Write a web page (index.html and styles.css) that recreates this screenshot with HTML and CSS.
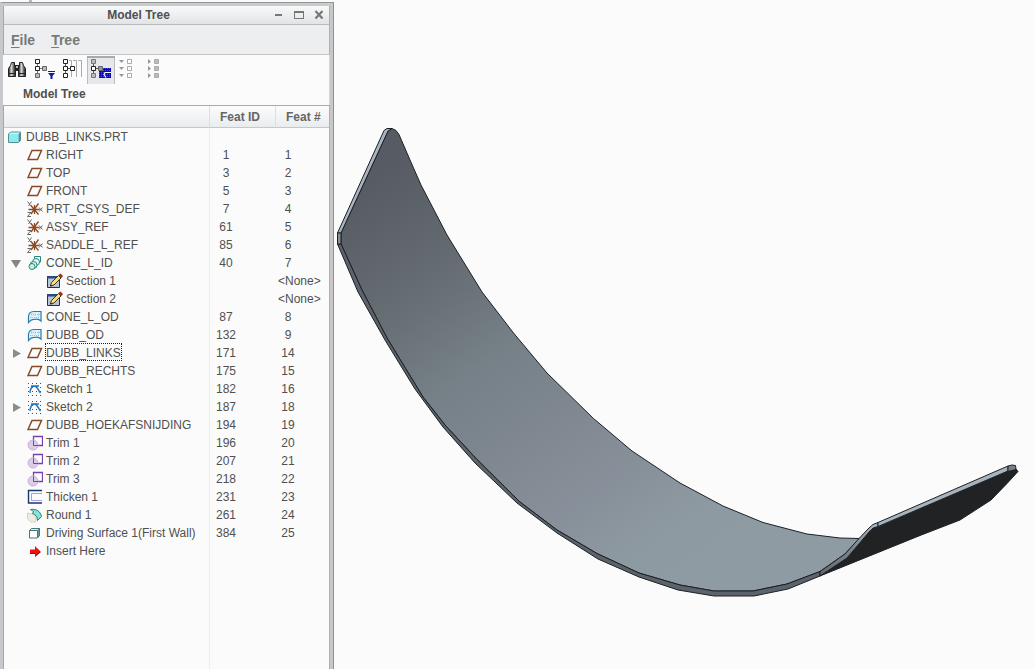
FILE: index.html
```html
<!DOCTYPE html>
<html lang="en">
<head>
<meta charset="utf-8">
<title>Model Tree</title>
<link rel="stylesheet" href="styles.css">
</head>
<body>
<svg class="defs" aria-hidden="true">
  <defs>
    <pattern id="dither" width="2" height="2" patternUnits="userSpaceOnUse"><path fill="#0c0cb0" d="M0 0h2v2H0z"/><path fill="#4a4ad0" d="M0 0h1v1H0z"/></pattern>
    <linearGradient id="barrel" x1="0" x2="1"><stop offset="0" stop-color="#111"/><stop offset=".4" stop-color="#ddd"/><stop offset="1" stop-color="#111"/></linearGradient>
    <symbol id="part" viewBox="0 0 16 16"><path fill="#c9f8f6" d="M1.500 5l2-2h10l-2 2z"/><path fill="#86eeee" d="M1.500 5h10v8.500h-10z"/><path fill="#35989b" d="M11.500 5l2-2v8.500l-2 2z"/><path fill="none" stroke="#5a8f92" stroke-linejoin="round" d="M1.500 5l2-2h10v8.500l-2 2h-10z"/></symbol>
    <symbol id="plane" viewBox="0 0 16 16"><path fill="none" stroke="#874a26" stroke-width="1.500" d="M5 3.500h9.500l-4 9H1z"/></symbol>
    <symbol id="csys" viewBox="0 0 16 16"><path fill="none" stroke="#8d4a22" stroke-width="1.300" d="M1.500 8.500h11M3.500 4l8 9.500M11.500 2.500L4 13M7.500 4v9"/><path fill="none" stroke="#666" d="M.5.500l2 2.500M4.500.500L1.500 5M12 6.500l3.500 4M15.500 6.500l-3.500 4M.5 11.500H4l-3.500 4H4"/></symbol>
    <symbol id="blend" viewBox="0 0 16 16"><g stroke="#27867a" fill="#f1fffc"><path d="M7.500 1.500h6v5.500h-6z"/><circle cx="9" cy="7" r="3.500" fill="#e6faf4"/><circle cx="6.500" cy="10" r="3.500" fill="#dff8f1"/><circle cx="5" cy="11.500" r="3" fill="#c4f1e5"/></g></symbol>
    <symbol id="section" viewBox="0 0 16 16"><path fill="#b9c5d4" stroke="#1f3152" d="M.5 3.500h12v11H.5z"/><path fill="#2a4a80" d="M0 3h13v2.500H0z"/><path fill="#f5e080" stroke="#3f3515" d="M3.500 13l1-3.500 7-7 2.500 2.500-7 7z"/><path fill="#a22b20" d="M11.500 2l2-1.500L16 3l-1.500 2z"/><path fill="#222" d="M3 13.500l.5-2 1.500 1.500z"/></symbol>
    <symbol id="surface" viewBox="0 0 16 16"><path fill="#e6f7fd" stroke="#2879ac" stroke-width="1.200" d="M1.500 13.500V8c0-4 2-5.500 5.500-5.500h7V12c-2-2-4-2.500-6.500-1.500-2.500-.5-4 .5-6 3z"/><path fill="none" stroke="#8cc4e2" stroke-dasharray="1 1" d="M5 4v6M8 3.500v6M11.500 3.500v6M3 8.500h10M4 5.500h9"/></symbol>
    <symbol id="sketch" viewBox="0 0 16 16"><path fill="none" stroke="#2d4f8c" stroke-dasharray="1 3" d="M1 2.500h14M1 6.500h14M1 10.500h14M1 14.500h14"/><path fill="none" stroke="#1775c4" stroke-width="1.400" d="M3 12c0-4 2-7 4.500-7s3.500 4 6 7M4 5h8"/></symbol>
    <symbol id="trim" viewBox="0 0 16 16"><path fill="#fff" stroke="#7a3fae" stroke-width="1.300" d="M6.500 1.500h9v9h-9z"/><circle cx="6" cy="10" r="5" fill="#dccbe9" stroke="#c9b4da"/><path fill="none" stroke="#7a3fae" d="M6.500 5.500v5H11"/></symbol>
    <symbol id="thicken" viewBox="0 0 16 16"><path fill="none" stroke="#17396f" stroke-width="1.400" d="M15 1.500H1.500v12.500H15"/><path fill="none" stroke="#aa9ce0" d="M15 4.500H4.500v7H15"/></symbol>
    <symbol id="round" viewBox="0 0 16 16"><path fill="#efede3" stroke="#d5d2c5" d="M.5 6l6 1.500 2.500 3.500v4H4l-3.500-3z"/><path fill="#80e6d8" stroke="#3c7770" d="M3.500 2.500c6-1 10 2 11 7l-4 4c0-4-2-6-5-7l1-2z"/></symbol>
    <symbol id="solid" viewBox="0 0 16 16"><path fill="#fff" stroke="#487777" d="M2.500 5.500l2-2h8v7l-2.500 2.500H2.500z"/><path fill="#6b9999" stroke="#487777" d="M10.500 5.500l2-2v7l-2 2.500z"/><path fill="#d6efed" stroke="#487777" d="M2.500 5.500h8l2-2h-8z"/></symbol>
    <symbol id="insert" viewBox="0 0 16 16"><path fill="#801010" d="M3 8h5V4l6 5-6 5v-3H3z"/><path fill="#ee1313" d="M3 6.500h5V3l5 5-5 5v-3H3z"/></symbol>
    <symbol id="open" viewBox="0 0 16 16"><path fill="#858585" d="M3 5h10l-5 8z"/></symbol>
    <symbol id="closed" viewBox="0 0 16 16"><path fill="#8c8c8c" d="M5 4l8 4.500L5 13z"/></symbol>
  </defs>
</svg>
<main class="app">
  <section class="side">
    <div class="backdrop"></div>
    <div class="window">
      <header class="titlebar">
        <h1 class="title">Model Tree</h1>
        <div class="controls">
          <button class="control" type="button" aria-label="Minimize"><svg viewBox="0 0 12 12"><path fill="#777" d="M2 5h7v2H2z"/></svg></button>
          <button class="control" type="button" aria-label="Maximize"><svg viewBox="0 0 12 12"><path fill="#777" d="M1 2h10v8H1zM2 4v5h8V4z" fill-rule="evenodd"/></svg></button>
          <button class="control" type="button" aria-label="Close"><svg viewBox="0 0 12 12"><path fill="none" stroke="#777" stroke-width="2.200" d="M2.500 2l7 7.500M9.500 2l-7 7.500"/></svg></button>
        </div>
      </header>
      <nav class="menu">
        <button class="menu-item" type="button"><u>F</u>ile</button>
        <button class="menu-item" type="button"><u>T</u>ree</button>
      </nav>
      <div class="toolbar">
        <button class="tool" type="button" aria-label="Find"><svg viewBox="0 0 28 28"><path fill="url(#barrel)" stroke="#222" d="M8.500 6.500h3v4l1 2v8H5.500v-8l2-3z"/><path fill="url(#barrel)" stroke="#222" d="M16.500 6.500h3l1 3 2 3v8h-7v-8l1-2z"/><path fill="#222" d="M12 9h4v6h-4zM5 17h8v1H5zM15 17h8v1h-8z"/><path fill="#bbb" d="M13 10h2v2h-2z"/></svg></button>
        <button class="tool" type="button" aria-label="Tree Filters"><svg viewBox="0 0 28 28"><path fill="none" stroke="#777" d="M6.500 7v12M8 12.500h4"/><path fill="#fff" stroke="#222" d="M4.500 3.500h4v4h-4zM4.500 10.500h4v4h-4z"/><path fill="#bbb" stroke="#666" d="M4.500 17.500h4v4h-4zM11.500 10.500h4v4h-4z"/><path fill="#1717a0" d="M17 15h7v1h-7zM17 17h7l-2.500 3v3h-2v-3z"/></svg></button>
        <button class="tool" type="button" aria-label="Tree Columns"><svg viewBox="0 0 28 28"><path fill="none" stroke="#aaa" d="M10 4.500h2.500V21M14 4.500h3.500V21M19 4.500h3.500V21"/><path fill="none" stroke="#555" d="M6.500 7v12M8 12.500h4"/><path fill="#fff" stroke="#222" d="M4.500 3.500h4v4h-4zM4.500 10.500h4v4h-4zM4.500 17.500h4v4h-4zM11.500 10.500h4v4h-4z"/></svg></button>
        <button class="tool pressed" type="button" aria-label="Show Tree" aria-pressed="true"><svg viewBox="0 0 28 28"><path fill="none" stroke="#555" d="M6.500 7v12M8 12.500h4"/><path fill="#bbb" stroke="#777" d="M4.500 3.500h4v4h-4zM4.500 17.500h4v4h-4z"/><path fill="#fff" stroke="#222" d="M4.500 10.500h4v4h-4z"/><path fill="#999" stroke="#666" d="M11.500 10.500h4v4h-4z"/><path fill="url(#dither)" d="M16 12h8v10H12v-7h4z"/><path fill="none" stroke="#fff" stroke-width="1.200" d="M24 16.500h-6l-1 2 2 3"/></svg></button>
        <button class="tool" type="button" aria-label="Expand All"><svg viewBox="0 0 28 28"><path fill="#999" d="M4 4h5l-2.500 3zM4 11h5l-2.500 3zM4 18h5l-2.500 3z"/><path fill="#fff" stroke="#aaa" d="M12.500 3.500h4v4h-4zM12.500 10.500h4v4h-4zM12.500 17.500h4v4h-4z"/></svg></button>
        <button class="tool" type="button" aria-label="Collapse All"><svg viewBox="0 0 28 28"><path fill="#999" d="M5 3v5l3-2.500zM5 10v5l3-2.500zM5 17v5l3-2.500z"/><path fill="#bbb" stroke="#aaa" d="M11.500 3.500h4v4h-4zM11.500 10.500h4v4h-4zM11.500 17.500h4v4h-4z"/></svg></button>
      </div>
      <h2 class="caption">Model Tree</h2>
      <div class="tree">
        <table class="grid">
          <colgroup><col class="col-name"><col class="col-id"><col class="col-num"></colgroup>
          <thead><tr><th aria-label="Name"></th><th>Feat ID</th><th>Feat #</th></tr></thead>
          <tbody>
            <tr><td><div class="node root"><svg class="icon"><use href="#part"/></svg>DUBB_LINKS.PRT</div></td><td></td><td></td></tr>
            <tr><td><div class="node"><svg class="icon"><use href="#plane"/></svg>RIGHT</div></td><td><span class="fid">1</span></td><td><span class="num">1</span></td></tr>
            <tr><td><div class="node"><svg class="icon"><use href="#plane"/></svg>TOP</div></td><td><span class="fid">3</span></td><td><span class="num">2</span></td></tr>
            <tr><td><div class="node"><svg class="icon"><use href="#plane"/></svg>FRONT</div></td><td><span class="fid">5</span></td><td><span class="num">3</span></td></tr>
            <tr><td><div class="node"><svg class="icon"><use href="#csys"/></svg>PRT_CSYS_DEF</div></td><td><span class="fid">7</span></td><td><span class="num">4</span></td></tr>
            <tr><td><div class="node"><svg class="icon"><use href="#csys"/></svg>ASSY_REF</div></td><td><span class="fid">61</span></td><td><span class="num">5</span></td></tr>
            <tr><td><div class="node"><svg class="icon"><use href="#csys"/></svg>SADDLE_L_REF</div></td><td><span class="fid">85</span></td><td><span class="num">6</span></td></tr>
            <tr><td><div class="node parent"><button class="twisty" type="button" aria-label="Collapse CONE_L_ID"><svg><use href="#open"/></svg></button><svg class="icon"><use href="#blend"/></svg>CONE_L_ID</div></td><td><span class="fid">40</span></td><td><span class="num">7</span></td></tr>
            <tr><td><div class="node child"><svg class="icon"><use href="#section"/></svg>Section 1</div></td><td></td><td><span class="none">&lt;None&gt;</span></td></tr>
            <tr><td><div class="node child"><svg class="icon"><use href="#section"/></svg>Section 2</div></td><td></td><td><span class="none">&lt;None&gt;</span></td></tr>
            <tr><td><div class="node"><svg class="icon"><use href="#surface"/></svg>CONE_L_OD</div></td><td><span class="fid">87</span></td><td><span class="num">8</span></td></tr>
            <tr><td><div class="node"><svg class="icon"><use href="#surface"/></svg>DUBB_OD</div></td><td><span class="fid">132</span></td><td><span class="num">9</span></td></tr>
            <tr><td><div class="node parent"><button class="twisty" type="button" aria-label="Expand DUBB_LINKS"><svg><use href="#closed"/></svg></button><svg class="icon"><use href="#plane"/></svg><span class="focused">DUBB_LINKS</span></div></td><td><span class="fid">171</span></td><td><span class="num">14</span></td></tr>
            <tr><td><div class="node"><svg class="icon"><use href="#plane"/></svg>DUBB_RECHTS</div></td><td><span class="fid">175</span></td><td><span class="num">15</span></td></tr>
            <tr><td><div class="node"><svg class="icon"><use href="#sketch"/></svg>Sketch 1</div></td><td><span class="fid">182</span></td><td><span class="num">16</span></td></tr>
            <tr><td><div class="node parent"><button class="twisty" type="button" aria-label="Expand Sketch 2"><svg><use href="#closed"/></svg></button><svg class="icon"><use href="#sketch"/></svg>Sketch 2</div></td><td><span class="fid">187</span></td><td><span class="num">18</span></td></tr>
            <tr><td><div class="node"><svg class="icon"><use href="#plane"/></svg>DUBB_HOEKAFSNIJDING</div></td><td><span class="fid">194</span></td><td><span class="num">19</span></td></tr>
            <tr><td><div class="node"><svg class="icon"><use href="#trim"/></svg>Trim 1</div></td><td><span class="fid">196</span></td><td><span class="num">20</span></td></tr>
            <tr><td><div class="node"><svg class="icon"><use href="#trim"/></svg>Trim 2</div></td><td><span class="fid">207</span></td><td><span class="num">21</span></td></tr>
            <tr><td><div class="node"><svg class="icon"><use href="#trim"/></svg>Trim 3</div></td><td><span class="fid">218</span></td><td><span class="num">22</span></td></tr>
            <tr><td><div class="node"><svg class="icon"><use href="#thicken"/></svg>Thicken 1</div></td><td><span class="fid">231</span></td><td><span class="num">23</span></td></tr>
            <tr><td><div class="node"><svg class="icon"><use href="#round"/></svg>Round 1</div></td><td><span class="fid">261</span></td><td><span class="num">24</span></td></tr>
            <tr><td><div class="node"><svg class="icon"><use href="#solid"/></svg>Driving Surface 1(First Wall)</div></td><td><span class="fid">384</span></td><td><span class="num">25</span></td></tr>
            <tr><td><div class="node"><svg class="icon"><use href="#insert"/></svg>Insert Here</div></td><td></td><td></td></tr>
          </tbody>
        </table>
      </div>
    </div>
  </section>
  <section class="viewport">
    <svg class="model" viewBox="334 0 701 669" preserveAspectRatio="xMinYMin meet" role="img" aria-label="Curved plate part">
      <defs>
        <linearGradient id="face" gradientUnits="userSpaceOnUse" x1="380" y1="170" x2="670" y2="600">
          <stop offset="0" stop-color="#575b63"/><stop offset=".2" stop-color="#636a70"/><stop offset=".42" stop-color="#768087"/><stop offset=".7" stop-color="#858d97"/><stop offset=".9" stop-color="#8e9aa1"/><stop offset="1" stop-color="#8f9ba3"/>
        </linearGradient>
        <linearGradient id="lip" gradientUnits="userSpaceOnUse" x1="820" y1="575" x2="872" y2="525">
          <stop offset="0" stop-color="#62676f"/><stop offset=".6" stop-color="#7d868e"/><stop offset="1" stop-color="#a9b3bb"/>
        </linearGradient>
      </defs>
      <g stroke="#1b2026" stroke-linejoin="round">
        <path fill="url(#face)" d="M341 233L388 131l4-2.500 4 2 3 4L410 160l11 25 26 50 35 57 31.500 41L547 373l46.500 45.500L632 451l48 32 43 23 40 16.500 44 11.500 33 4 19.500.5L845 554l-25 17.500L787 584l-34 7h-39l-34-6-41-12-42-19.500L557 530l-37-28-43-42.500L445 425l-22-28-36-59-25-48-21-46z"/>
        <path fill="#5d636a" d="M337.500 244L358 292l27 48 30 49 28 38 32 36 42 40 40 30 41 26 41 18 39 13 36 6h40l34-7 32-13v-4.500L787 584l-34 7h-39l-34-6-41-12-42-19.500L557 530l-37-28-43-42.500L445 425l-22-28-36-59-25-48-21-46z"/>
        <path fill="#aab4bf" d="M337.500 233L384 130.500l3-2 5 0-4 2.500L341 233z"/>
        <path fill="#848c95" d="M337.500 233h3.500v11h-3.500z"/>
        <path fill="#202224" d="M820 576l27-18 22-26 5-4 5.500-1.500L1008 471l8-2 2 2.500-11 12-16 16.500-31 20-40 15.500z"/>
        <path fill="url(#lip)" d="M820 571.500l25-17.500 14-15.500 10-10.500 4-3.500 5-2v4l-5 1.500-4 4-22 26-27 18z"/>
        <path fill="#a8b3bb" d="M878 522.500L1008 466v5L878 526.500z"/>
        <path fill="#778087" d="M1008 466l4-1 3.500.5.500 4-8 2z"/>
      </g>
    </svg>
  </section>
</main>
</body>
</html>
```
FILE: styles.css
```css
* { box-sizing: border-box; }

body {
  margin: 0;
  background: #fbfbfb;
  color: #505050;
  font: 12px/18px "Liberation Sans", Arial, sans-serif;
}

button {
  margin: 0;
  padding: 0;
  border: 0;
  background: none;
  color: inherit;
  font: inherit;
}

svg { display: block; }
.defs { position: absolute; width: 0; height: 0; }

.app { display: flex; height: 100vh; overflow: hidden; }

.side {
  display: flex;
  flex: 0 0 334px;
  flex-direction: column;
}

.backdrop {
  flex: 0 0 2px;
  background: linear-gradient(90deg, #fbfbfb 29px, #b8babb 29px, #b8babb 32px, #fbfbfb 32px);
}

.window {
  display: flex;
  flex: 1;
  flex-direction: column;
  min-height: 0;
  border-left: 3px solid #c6c8cb;
  border-right: 1px solid #8e9092;
  border-top: 1px solid #929496;
  background: #fbfbfb;
  box-shadow: inset 0 3px #c9cbcd, inset -3px 0 #c8c8c8;
  padding: 3px 3px 0 0;
}

.titlebar {
  display: flex;
  align-items: center;
  height: 19px;
  border-left: 1px solid #a5a7a9;
  border-right: 1px solid #b0b0b0;
  border-bottom: 1px solid #b9bbbd;
  background: linear-gradient(#f8f9f9, #e1e4e6);
}

.title {
  flex: 1;
  margin: 0;
  text-align: center;
  font-size: 12px;
  line-height: 18px;
}

.controls { display: flex; gap: 8px; padding-right: 4px; }
.control { width: 12px; height: 12px; }
.control svg { width: 12px; height: 12px; }

.menu {
  display: flex;
  gap: 16px;
  height: 30px;
  padding-left: 7px;
  border-left: 1px solid #a5a7a9;
  border-right: 1px solid #b0b0b0;
  border-bottom: 1px solid #c3c5c7;
  background: #eceef0;
}

.menu-item { color: #77797b; font-size: 14px; font-weight: bold; }
.menu-item u { text-underline-offset: 2px; }

.toolbar {
  display: flex;
  padding-top: 1px;
  border-right: 1px solid #d8d8d8;
}

.tool { width: 28px; height: 28px; }
.tool svg { width: 28px; height: 28px; }
.pressed { background: #e5e7ea; box-shadow: inset 0 2px #a8aaad, inset 1px 0 #b9bbbd, inset -1px 0 #b9bbbd; }

.caption {
  margin: 0;
  padding: 1px 0 2px 20px;
  border-right: 1px solid #d8d8d8;
  font-size: 12px;
  line-height: 18px;
}

.tree {
  flex: 1;
  min-height: 0;
  border-left: 1px solid #a5a7a9;
  border-right: 1px solid #b0b0b0;
  border-top: 1px solid #a8aaac;
  background: linear-gradient(#eeeeee, #eeeeee) 205px 0 / 1px 100% no-repeat;
}

.grid {
  width: 100%;
  border-collapse: separate;
  border-spacing: 0;
  table-layout: fixed;
}

.col-name { width: 206px; }
.col-id { width: 66px; }

th {
  height: 22px;
  padding: 0 0 0 10px;
  border-right: 1px solid #dcdfe0;
  border-bottom: 1px solid #c5c8ca;
  background: linear-gradient(#fcfcfc, #e9ecee);
  color: #646667;
  text-align: left;
  line-height: 20px;
}

th:last-child { border-right: 0; }

td { height: 18px; padding: 0; }

.node {
  display: flex;
  gap: 3px;
  padding-left: 23px;
  white-space: nowrap;
}

.root { padding-left: 3px; }
.parent { padding-left: 4px; }
.child { padding-left: 43px; }

.icon { flex: none; width: 16px; height: 16px; margin-top: 1px; }
.twisty { width: 16px; height: 18px; }
.twisty svg { width: 16px; height: 18px; }
.focused { height: 16px; line-height: 18px; outline: 1px dotted #222; }

.fid, .num { display: inline-block; text-align: center; }
.fid { width: 20px; margin-left: 6px; }
.num { width: 16px; margin-left: 4px; }
.none { margin-left: 2px; }

.viewport { flex: 1; min-width: 0; }
.model { width: 100%; height: auto; }
```
